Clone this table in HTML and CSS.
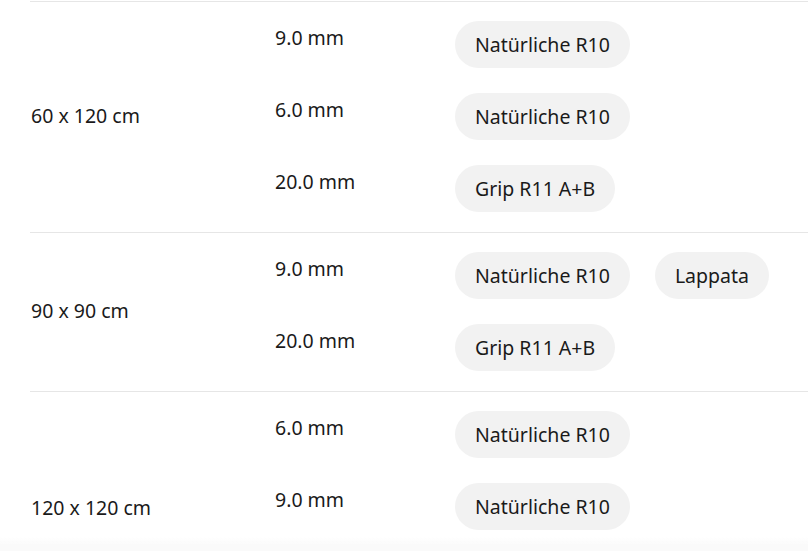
FILE: index.html
```html
<!DOCTYPE html>
<html lang="de">
<head>
<meta charset="utf-8">
<link rel="stylesheet" href="styles.css">
</head>
<body>
<div class="table">
  <div class="group">
    <div class="size">60 x 120 cm</div>
    <div class="rows">
      <div class="row"><div class="thick">9.0 mm</div><div class="pills"><span class="pill">Natürliche R10</span></div></div>
      <div class="row"><div class="thick">6.0 mm</div><div class="pills"><span class="pill">Natürliche R10</span></div></div>
      <div class="row"><div class="thick">20.0 mm</div><div class="pills"><span class="pill">Grip R11 A+B</span></div></div>
    </div>
  </div>
  <div class="group">
    <div class="size">90 x 90 cm</div>
    <div class="rows">
      <div class="row"><div class="thick">9.0 mm</div><div class="pills"><span class="pill">Natürliche R10</span><span class="pill">Lappata</span></div></div>
      <div class="row"><div class="thick">20.0 mm</div><div class="pills"><span class="pill">Grip R11 A+B</span></div></div>
    </div>
  </div>
  <div class="group group-open">
    <div class="size">120 x 120 cm</div>
    <div class="rows">
      <div class="row"><div class="thick">6.0 mm</div><div class="pills"><span class="pill">Natürliche R10</span></div></div>
      <div class="row"><div class="thick">9.0 mm</div><div class="pills"><span class="pill">Natürliche R10</span></div></div>
    </div>
  </div>
</div>
<div class="fade"></div>
</body>
</html>
```
FILE: styles.css
```css
html, body {
  margin: 0;
  padding: 0;
  background: #fff;
  overflow: hidden;
  height: 551px;
}
body {
  font-family: "Noto Sans", "Open Sans", sans-serif;
  font-size: 19.5px;
  color: #1a1a1a;
}
.table {
  margin-left: 30px;
  padding-top: 1px;
}
.group {
  display: flex;
  border-top: 1px solid #e6e6e6;
  padding: 19px 0 20px;
}
.group-open .rows {
  padding-bottom: 75px;
}
.size {
  width: 245px;
  flex: none;
  display: flex;
  align-items: center;
  padding-left: 1px;
  padding-bottom: 2px;
  box-sizing: border-box;
}
.rows {
  display: flex;
  flex-direction: column;
  gap: 25px;
}
.row {
  display: flex;
}
.thick {
  width: 180px;
  flex: none;
  line-height: 24px;
  padding-top: 5px;
}
.pills {
  display: flex;
  gap: 25px;
}
.pill {
  display: inline-flex;
  align-items: center;
  height: 47px;
  padding: 0 20px;
  border-radius: 24px;
  background: #f2f2f2;
  white-space: nowrap;
}
.fade {
  position: fixed;
  left: 0;
  right: 0;
  bottom: 0;
  height: 14px;
  background: linear-gradient(to bottom, rgba(250,250,250,0), #fafafa 60%);
}
```
